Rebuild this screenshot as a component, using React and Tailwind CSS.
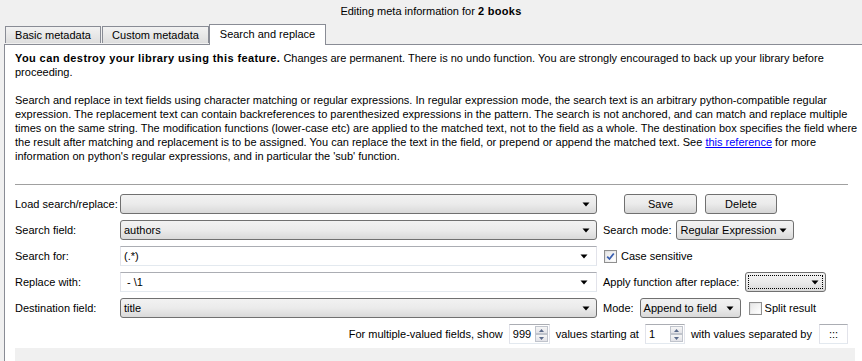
import React from "react";

const Arrow = () => (
  <svg width="8" height="5" viewBox="0 0 8 5" className="shrink-0">
    <path d="M0.5 0.5 H7.5 L4 4.5 Z" fill="#000" />
  </svg>
);

const Combo = ({ w, text, focus }) => (
  <div
    className={`h-[20px] ${w} shrink-0 flex items-center justify-between rounded-[3px] border border-[#707070] bg-gradient-to-b from-[#f2f2f2] via-[#ebebeb] to-[#d9d9d9] pl-[3px] pr-[6px] relative`}
  >
    {focus && <div className="absolute inset-[2px] border border-dotted border-[#000]" />}
    <span className="whitespace-nowrap">{text}</span>
    <Arrow />
  </div>
);

const EditCombo = ({ w, text }) => (
  <div
    className={`h-[20px] ${w} shrink-0 flex items-center justify-between border border-[#abadb3] border-l-[#e2e3ea] border-r-[#e2e3ea] border-b-[#e3e9ef] bg-white pl-[3px] pr-[8px]`}
  >
    <span className="whitespace-pre">{text}</span>
    <Arrow />
  </div>
);

const Button = ({ w, children }) => (
  <div
    className={`h-[20px] ${w} flex items-center justify-center rounded-[3px] border border-[#707070] bg-gradient-to-b from-[#f2f2f2] via-[#ebebeb] to-[#d5d5d5]`}
  >
    {children}
  </div>
);

const Check = ({ checked }) => (
  <div className="w-[13px] h-[13px] shrink-0 border border-[#8f8f8f] bg-gradient-to-br from-[#dcdcdc] to-[#fbfbfb] flex items-center justify-center">
    <div className="w-[9px] h-[9px] bg-gradient-to-br from-[#e8e8e8] to-[#ffffff] flex items-center justify-center">
      {checked && (
        <svg width="9" height="9" viewBox="0 0 9 9">
          <path d="M1.2 4.6 L3.5 7 L7.8 1.5" stroke="#3a5fb0" strokeWidth="1.8" fill="none" />
        </svg>
      )}
    </div>
  </div>
);

const Spin = ({ w, value }) => (
  <div className={`h-[20px] ${w} shrink-0 flex items-center border border-[#abadb3] border-l-[#e2e3ea] border-r-[#e2e3ea] border-b-[#e3e9ef] bg-white pl-[3px]`}>
    <span className="flex-1">{value}</span>
    <div className="w-[13px] h-[16px] mr-[1px] flex flex-col">
      <div className="h-[8px] border border-[#c0c4cc] bg-gradient-to-b from-[#f6f6f6] to-[#e3e3e8] flex items-center justify-center">
        <svg width="5" height="3" viewBox="0 0 5 3"><path d="M0 3 L2.5 0 L5 3 Z" fill="#5a6a8a" /></svg>
      </div>
      <div className="h-[8px] border border-[#c0c4cc] bg-gradient-to-b from-[#f6f6f6] to-[#e3e3e8] flex items-center justify-center">
        <svg width="5" height="3" viewBox="0 0 5 3"><path d="M0 0 L5 0 L2.5 3 Z" fill="#5a6a8a" /></svg>
      </div>
    </div>
  </div>
);

const Label = ({ children }) => <div className="w-[105px] shrink-0 whitespace-nowrap">{children}</div>;

export default function App() {
  return (
    <div
      className="w-[862px] h-[361px] overflow-hidden bg-[#f0f0f0] text-[11px] text-black flex flex-col"
      style={{ fontFamily: '"Liberation Sans", Arial, sans-serif' }}
    >
      <div className="h-[23px] shrink-0 flex items-center justify-center">
        <span>
          Editing meta information for <b className="tracking-[0.3px]">2 books</b>
        </span>
      </div>
      <div className="h-[21px] shrink-0 flex items-end pl-[5px] relative z-10">
        <div className="w-[96px] h-[17px] mb-[1px] flex items-center justify-center border border-[#898c95] border-b-0 bg-gradient-to-b from-[#f2f2f2] to-[#dedede]">
          Basic metadata
        </div>
        <div className="w-[107px] h-[17px] mb-[1px] ml-[1px] flex items-center justify-center border border-[#898c95] border-b-0 bg-gradient-to-b from-[#f2f2f2] to-[#dedede]">
          Custom metadata
        </div>
        <div className="w-[117px] h-[21px] mb-[-1px] flex items-center justify-center border border-[#898c95] border-b-0 bg-white pb-[1px]">
          Search and replace
        </div>
      </div>
      <div className="flex-1 min-h-0 ml-[4px] border-l border-t border-[#898c95] bg-white pl-[10px] pr-[13px] pt-[6px]">
        <div className="leading-[14px] whitespace-nowrap">
          <div>
            <b className="tracking-[0.4px]">You can destroy your library using this feature.</b> Changes are permanent. There is no undo function. You are strongly encouraged to back up your library before
          </div>
          <div>proceeding.</div>
          <div className="mt-[14px]">
            Search and replace in text fields using character matching or regular expressions. In regular expression mode, the search text is an arbitrary python-compatible regular
          </div>
          <div>
            expression. The replacement text can contain backreferences to parenthesized expressions in the pattern. The search is not anchored, and can match and replace multiple
          </div>
          <div>
            times on the same string. The modification functions (lower-case etc) are applied to the matched text, not to the field as a whole. The destination box specifies the field where
          </div>
          <div>
            the result after matching and replacement is to be assigned. You can replace the text in the field, or prepend or append the matched text. See{" "}
            <span className="text-[#0000ff] underline">this reference</span> for more
          </div>
          <div>information on python's regular expressions, and in particular the 'sub' function.</div>
        </div>
        <div className="mt-[21px] h-px bg-[#a0a0a0] w-[833px]" />
        <div className="mt-[9px] flex flex-col gap-[6px] w-[833px]">
          <div className="flex items-center h-[20px]">
            <Label>Load search/replace:</Label>
            <Combo w="w-[477px]" text="" />
            <div className="ml-[27px]">
              <Button w="w-[73px]">Save</Button>
            </div>
            <div className="ml-[8px]">
              <Button w="w-[72px]">Delete</Button>
            </div>
          </div>
          <div className="flex items-center h-[20px]">
            <Label>Search field:</Label>
            <Combo w="w-[477px]" text="authors" />
            <span className="ml-[6px] mr-[5px] whitespace-nowrap">Search mode:</span>
            <Combo w="w-[118px]" text="Regular Expression" />
          </div>
          <div className="flex items-center h-[20px]">
            <Label>Search for:</Label>
            <EditCombo w="w-[477px]" text="(.*)" />
            <div className="ml-[7px]">
              <Check checked />
            </div>
            <span className="ml-[4px] whitespace-nowrap">Case sensitive</span>
          </div>
          <div className="flex items-center h-[20px]">
            <Label>Replace with:</Label>
            <EditCombo w="w-[477px]" text=" - \1" />
            <span className="ml-[6px] mr-[6px] whitespace-nowrap">Apply function after replace:</span>
            <Combo w="w-[81px]" text="" focus />
          </div>
          <div className="flex items-center h-[20px]">
            <Label>Destination field:</Label>
            <Combo w="w-[477px]" text="title" />
            <span className="ml-[6px] mr-[6px] whitespace-nowrap">Mode:</span>
            <Combo w="w-[101px]" text="Append to field" />
            <div className="ml-[8px]">
              <Check />
            </div>
            <span className="ml-[3px] whitespace-nowrap">Split result</span>
          </div>
          <div className="flex items-center justify-end h-[20px] whitespace-nowrap">
            <span>For multiple-valued fields, show</span>
            <div className="ml-[6px]">
              <Spin w="w-[41px]" value="999" />
            </div>
            <span className="ml-[6px]">values starting at</span>
            <div className="ml-[6px]">
              <Spin w="w-[40px]" value="1" />
            </div>
            <span className="ml-[6px]">with values separated by</span>
            <div className="ml-[7px] h-[20px] w-[29px] flex items-center justify-center border border-[#abadb3] border-l-[#e2e3ea] border-r-[#e2e3ea] border-b-[#e3e9ef] bg-white">
              :::
            </div>
          </div>
        </div>
        <div className="mt-[4px] h-[20px] w-[840px] bg-[#f0f0f0]" />
      </div>
    </div>
  );
}
